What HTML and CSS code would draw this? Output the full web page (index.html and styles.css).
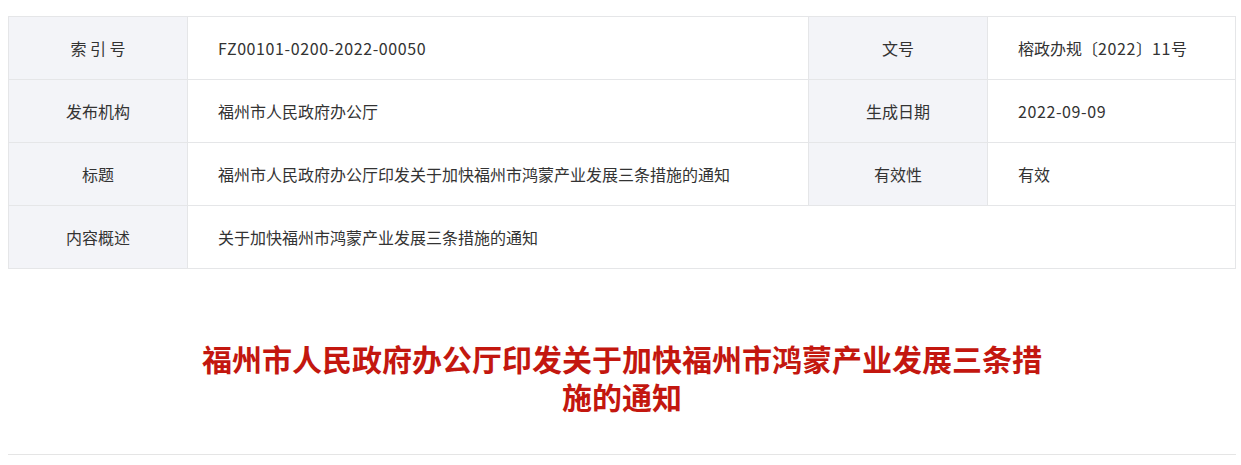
FILE: index.html
```html
<!DOCTYPE html>
<html lang="zh-CN">
<head>
    <meta charset="UTF-8">
    <meta name="viewport" content="width=device-width, initial-scale=1.0">
    <title>福州市人民政府办公厅印发关于加快福州市鸿蒙产业发展三条措施的通知</title>
    <link rel="stylesheet" href="styles.css">
</head>
<body>
    <div class="page">
        <table class="info-table">
            <tr>
                <td class="label">索 引 号</td>
                <td class="value"><span class="num">FZ00101-0200-2022-00050</span></td>
                <td class="label">文号</td>
                <td class="value">榕政办规〔<span class="num">2022</span>〕<span class="num">11</span>号</td>
            </tr>
            <tr>
                <td class="label">发布机构</td>
                <td class="value">福州市人民政府办公厅</td>
                <td class="label">生成日期</td>
                <td class="value"><span class="num">2022-09-09</span></td>
            </tr>
            <tr>
                <td class="label">标题</td>
                <td class="value">福州市人民政府办公厅印发关于加快福州市鸿蒙产业发展三条措施的通知</td>
                <td class="label">有效性</td>
                <td class="value">有效</td>
            </tr>
            <tr>
                <td class="label">内容概述</td>
                <td class="value" colspan="3">关于加快福州市鸿蒙产业发展三条措施的通知</td>
            </tr>
        </table>

        <div class="article">
            <h1 class="article-title">福州市人民政府办公厅印发关于加快福州市鸿蒙产业发展三条措施的通知</h1>
        </div>
    </div>
</body>
</html>
```

FILE: styles.css
```css
* {
    margin: 0;
    padding: 0;
    box-sizing: border-box;
}

body {
    font-family: "Noto Sans CJK SC", "Noto Sans", sans-serif;
    background-color: #fff;
    color: #333;
}

.page {
    padding: 16px 5px 0 8px;
}

.info-table {
    width: 1228px;
    border-collapse: collapse;
    table-layout: fixed;
    font-size: 16px;
}

.info-table td {
    height: 63px;
    border: 1px solid #e5e6e8;
}

.info-table .label {
    width: 179px;
}

.label {
    background-color: #f3f4f8;
    text-align: center;
}

.value {
    padding-left: 30px;
}

.num {
    letter-spacing: 0.6px;
}

.info-table tr td:nth-child(2) {
    width: 621px;
}

.article {
    padding-top: 70px;
    border-bottom: 1px solid #e5e5e5;
    padding-bottom: 39px;
}

.article-title {
    max-width: 860px;
    margin: 0 auto;
    text-align: center;
    color: #c3170f;
    font-size: 30px;
    line-height: 38px;
    font-weight: bold;
}
```
